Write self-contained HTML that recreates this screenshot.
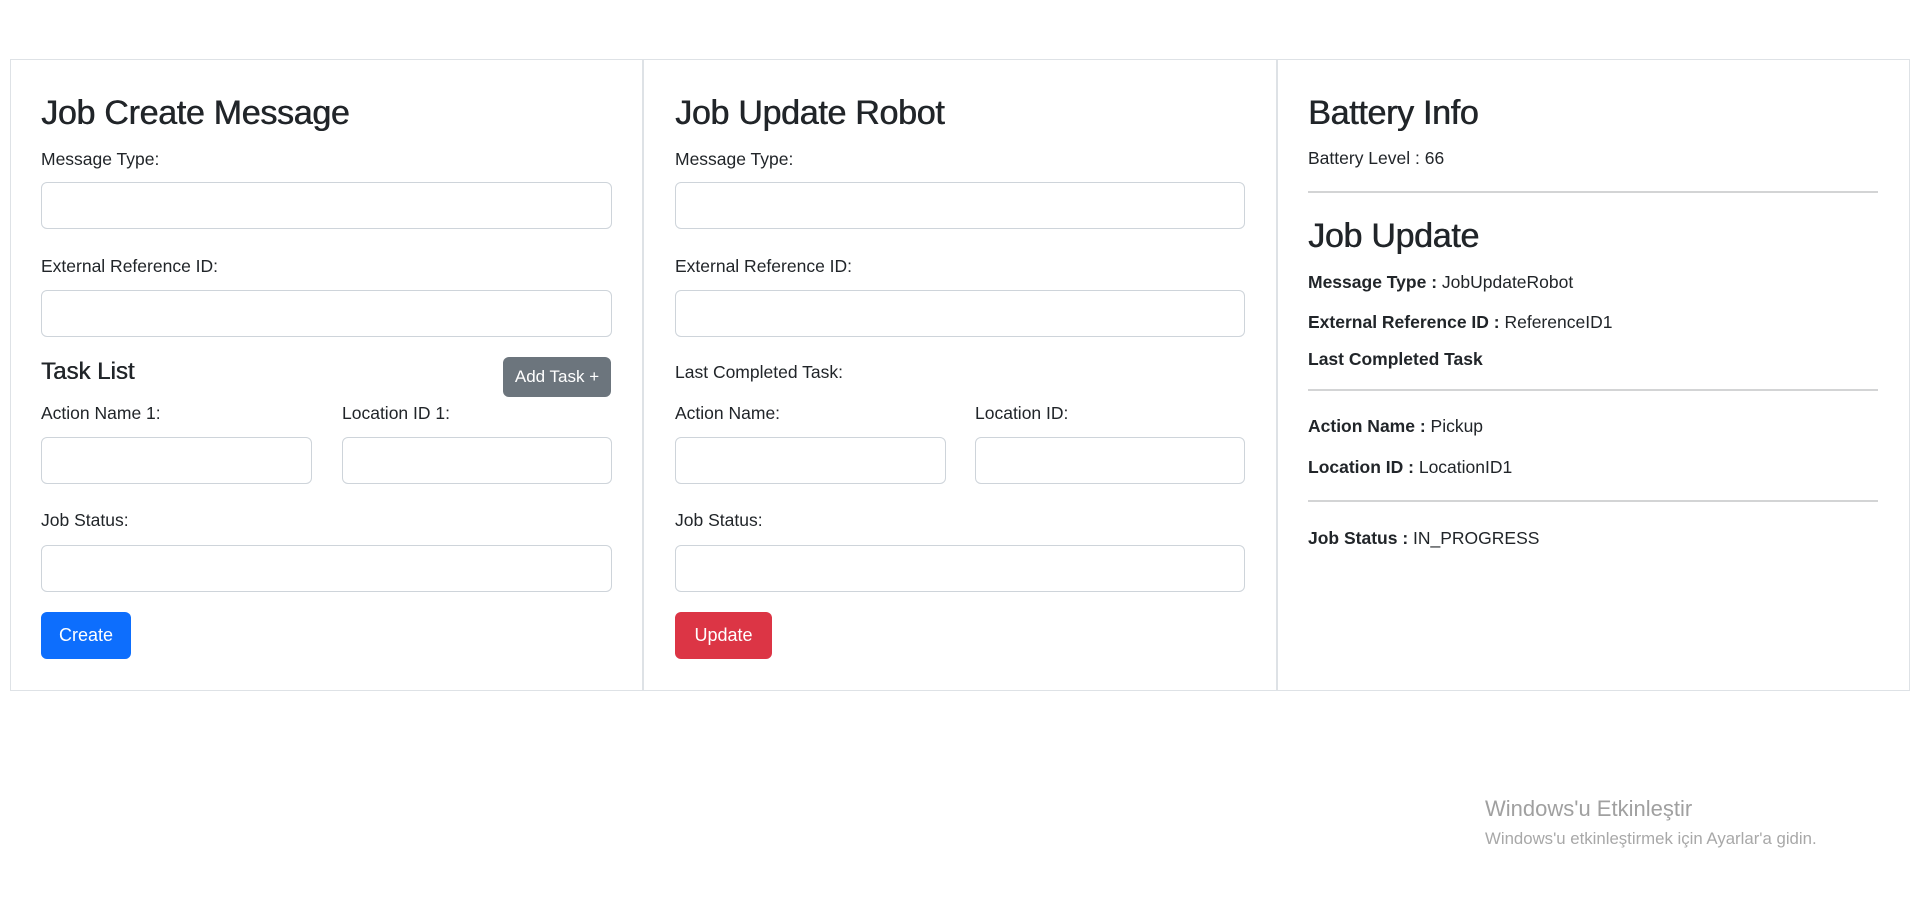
<!DOCTYPE html>
<html><head><meta charset="utf-8"><style>
*{box-sizing:border-box;margin:0;padding:0}
body{width:1920px;height:898px;background:#fff;font-family:"Liberation Sans",Arial,sans-serif;color:#212529;position:relative;overflow:hidden}
.box{position:absolute;left:10px;top:59px;width:1900px;height:632px;border:1px solid #dee2e6}
.vd{position:absolute;top:59px;height:632px;width:2px;background:#dee2e6}
.a{position:absolute;white-space:nowrap}
h2{position:absolute;font-weight:normal;font-size:34px;line-height:40px;white-space:nowrap;letter-spacing:-0.3px;text-shadow:0.6px 0 0 #212529}
.l{position:absolute;font-size:17.5px;line-height:22px;white-space:nowrap}
.in{position:absolute;height:47px;border:1px solid #ced4da;border-radius:6px;background:#fff}
.btn{position:absolute;border-radius:6px;color:#fff;font-size:18px;display:flex;align-items:center;justify-content:center}
.hr{position:absolute;height:2px;background:#d3d4d5}
b{font-weight:bold}
</style></head><body>
<div class="box"></div>
<div class="vd" style="left:642px"></div>
<div class="vd" style="left:1276px"></div>

<h2 style="left:41px;top:93px">Job Create Message</h2>
<div class="l" style="left:41px;top:148px">Message Type:</div>
<div class="in" style="left:41px;top:182px;width:571px"></div>
<div class="l" style="left:41px;top:255px">External Reference ID:</div>
<div class="in" style="left:41px;top:290px;width:571px"></div>
<div class="a" style="left:41px;top:358px;font-size:24px;line-height:28px;text-shadow:0.5px 0 0 #212529">Task List</div>
<div class="btn" style="left:503px;top:357px;width:108px;height:40px;background:#6c757d;font-size:17px">Add Task +</div>
<div class="l" style="left:41px;top:402px">Action Name 1:</div>
<div class="l" style="left:342px;top:402px">Location ID 1:</div>
<div class="in" style="left:41px;top:437px;width:271px"></div>
<div class="in" style="left:342px;top:437px;width:270px"></div>
<div class="l" style="left:41px;top:509px">Job Status:</div>
<div class="in" style="left:41px;top:545px;width:571px"></div>
<div class="btn" style="left:41px;top:612px;width:90px;height:47px;background:#0d6efd">Create</div>

<h2 style="left:675px;top:93px">Job Update Robot</h2>
<div class="l" style="left:675px;top:148px">Message Type:</div>
<div class="in" style="left:675px;top:182px;width:570px"></div>
<div class="l" style="left:675px;top:255px">External Reference ID:</div>
<div class="in" style="left:675px;top:290px;width:570px"></div>
<div class="l" style="left:675px;top:361px">Last Completed Task:</div>
<div class="l" style="left:675px;top:402px">Action Name:</div>
<div class="l" style="left:975px;top:402px">Location ID:</div>
<div class="in" style="left:675px;top:437px;width:271px"></div>
<div class="in" style="left:975px;top:437px;width:270px"></div>
<div class="l" style="left:675px;top:509px">Job Status:</div>
<div class="in" style="left:675px;top:545px;width:570px"></div>
<div class="btn" style="left:675px;top:612px;width:97px;height:47px;background:#dc3545">Update</div>

<h2 style="left:1308px;top:93px">Battery Info</h2>
<div class="l" style="left:1308px;top:147px">Battery Level : 66</div>
<div class="hr" style="left:1308px;top:191px;width:570px"></div>
<h2 style="left:1308px;top:216px">Job Update</h2>
<div class="l" style="left:1308px;top:271px"><b>Message Type :</b> JobUpdateRobot</div>
<div class="l" style="left:1308px;top:311px"><b>External Reference ID :</b> ReferenceID1</div>
<div class="l" style="left:1308px;top:348px"><b>Last Completed Task</b></div>
<div class="hr" style="left:1308px;top:389px;width:570px"></div>
<div class="l" style="left:1308px;top:415px"><b>Action Name :</b> Pickup</div>
<div class="l" style="left:1308px;top:456px"><b>Location ID :</b> LocationID1</div>
<div class="hr" style="left:1308px;top:500px;width:570px"></div>
<div class="l" style="left:1308px;top:527px"><b>Job Status :</b> IN_PROGRESS</div>

<div class="a" style="left:1485px;top:796px;font-size:22px;color:#a0a0a0">Windows'u Etkinleştir</div>
<div class="a" style="left:1485px;top:829px;font-size:16.8px;color:#a8a8a8">Windows'u etkinleştirmek için Ayarlar'a gidin.</div>
</body></html>
